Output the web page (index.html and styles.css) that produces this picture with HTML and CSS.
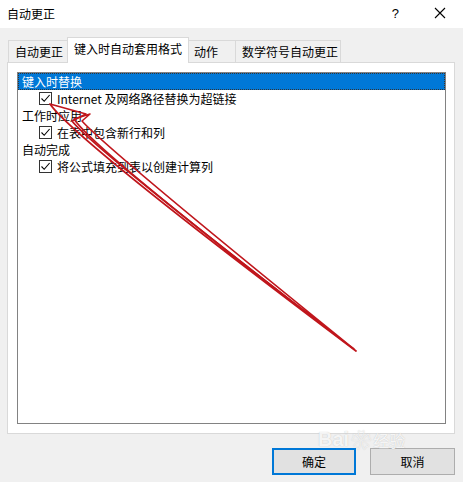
FILE: index.html
```html
<!DOCTYPE html>
<html lang="zh-CN">
<head>
<meta charset="utf-8">
<title>自动更正</title>
<link rel="stylesheet" href="styles.css">
</head>
<body>
<div class="window">
  <div class="titlebar">
    <span class="title">自动更正</span>
    <span class="help">?</span>
    <svg class="close" width="12" height="12" viewBox="0 0 12 12"><path d="M1 1L11 11M11 1L1 11" stroke="#000" stroke-width="1.1" fill="none"/></svg>
  </div>
  <div class="tabs">
    <div class="tab t1">自动更正</div>
    <div class="tab active">键入时自动套用格式</div>
    <div class="tab t3">动作</div>
    <div class="tab t4">数学符号自动更正</div>
  </div>
  <div class="panel">
    <div class="listbox">
      <div class="row cat selected">键入时替换</div>
      <div class="row item"><span class="cb"><svg width="11" height="11" viewBox="0 0 11 11"><path d="M1.5 5.5L4.2 8.3L9.6 2" stroke="#000" stroke-width="1.1" fill="none"/></svg></span><span>Internet 及网络路径替换为超链接</span></div>
      <div class="row cat">工作时应用</div>
      <div class="row item"><span class="cb"><svg width="11" height="11" viewBox="0 0 11 11"><path d="M1.5 5.5L4.2 8.3L9.6 2" stroke="#000" stroke-width="1.1" fill="none"/></svg></span><span>在表中包含新行和列</span></div>
      <div class="row cat">自动完成</div>
      <div class="row item"><span class="cb"><svg width="11" height="11" viewBox="0 0 11 11"><path d="M1.5 5.5L4.2 8.3L9.6 2" stroke="#000" stroke-width="1.1" fill="none"/></svg></span><span>将公式填充到表以创建计算列</span></div>
    </div>
  </div>
  <div class="buttons">
    <div class="btn default">确定</div>
    <div class="btn">取消</div>
  </div>
  <svg class="arrows" width="463" height="482" viewBox="0 0 463 482">
    <path d="M50,104 L86,114 L72,121 Q95,150 356,351 Q75,140 50,104 Z" fill="none" stroke="#c0161c" stroke-width="1.8" stroke-linejoin="round"/>
    <path d="M74,119 L90,114 L82,121 Q108,150 354,349 Q96,152 74,119 Z" fill="none" stroke="#c0161c" stroke-width="1.6" stroke-linejoin="round"/>
  </svg>
  <div class="watermark"><span class="wm-bai">Bai</span><span class="wm-paw">&#x2740;</span><span class="wm-jy">经验</span></div>
</div>
</body>
</html>
```
FILE: styles.css
```css
html, body {
  margin: 0;
  padding: 0;
}
body {
  background: #f0f0f0;
  font-family: "Noto Sans CJK SC", "Noto Sans", sans-serif;
  font-size: 12px;
  color: #000;
}
.window {
  position: relative;
  width: 463px;
  height: 482px;
  overflow: hidden;
  display: flex;
  flex-direction: column;
}
.titlebar {
  height: 28px;
  background: #fff;
  display: flex;
  align-items: center;
  padding: 0 0 2px 7px;
  box-sizing: border-box;
}
.title {
  flex: 1;
  font-size: 12px;
}
.help {
  font-family: "Liberation Sans", sans-serif;
  font-size: 13px;
  margin-right: 35px;
}
.close {
  margin-right: 17px;
}
.tabs {
  margin-top: 9px;
  padding-left: 8px;
  height: 25px;
  display: flex;
  align-items: flex-end;
  position: relative;
  z-index: 1;
}
.tab {
  height: 22px;
  box-sizing: border-box;
  border: 1px solid #d9d9d9;
  border-bottom: none;
  border-right: none;
  background: #f0f0f0;
  line-height: 22px;
  white-space: nowrap;
}
.t1 {
  width: 59px;
  padding-left: 6px;
}
.tab.active {
  width: 122px;
  height: 26px;
  margin-bottom: -1px;
  background: #fff;
  border-right: 1px solid #d9d9d9;
  padding: 0 0 3px 6px;
  line-height: 22px;
}
.t3 {
  width: 46px;
  border-left: none;
  padding-left: 5px;
}
.t4 {
  width: 106px;
  border-right: 1px solid #d9d9d9;
  padding-left: 6px;
}
.panel {
  margin-left: 7px;
  width: 448px;
  height: 372px;
  box-sizing: border-box;
  background: #fff;
  border: 1px solid #d9d9d9;
  padding: 9px 8px 9px 9px;
}
.listbox {
  height: 100%;
  box-sizing: border-box;
  border: 1px solid #828282;
  background: #fff;
}
.row {
  height: 17px;
  line-height: 17px;
  white-space: nowrap;
  box-sizing: border-box;
}
.cat {
  padding-left: 4px;
}
.selected {
  background: #0078d7;
  color: #fff;
  outline: 1px dotted #333;
  outline-offset: -1px;
}
.item {
  display: flex;
  align-items: center;
  padding-left: 21px;
  gap: 5px;
}
.cb {
  width: 13px;
  height: 13px;
  box-sizing: border-box;
  border: 1px solid #333;
  display: flex;
  align-items: center;
  justify-content: center;
  background: #fff;
}
.buttons {
  margin-top: 14px;
  display: flex;
  justify-content: flex-end;
  gap: 14px;
  padding-right: 8px;
}
.btn {
  width: 85px;
  height: 27px;
  box-sizing: border-box;
  border: 1px solid #adadad;
  background: #e1e1e1;
  display: flex;
  align-items: center;
  justify-content: center;
}
.btn.default {
  width: 84px;
  border: 2px solid #0078d7;
}
.arrows {
  position: absolute;
  left: 0;
  top: 0;
  pointer-events: none;
}
.watermark {
  position: absolute;
  left: 318px;
  top: 425px;
  display: flex;
  align-items: center;
  gap: 2px;
  color: rgba(255, 255, 255, 0.85);
  text-shadow: 0 0 1px rgba(150, 150, 150, 0.6);
  pointer-events: none;
}
.wm-bai {
  font-family: "Liberation Sans", sans-serif;
  font-weight: bold;
  font-size: 20px;
}
.wm-paw {
  font-size: 20px;
}
.wm-jy {
  font-size: 16px;
}
```
